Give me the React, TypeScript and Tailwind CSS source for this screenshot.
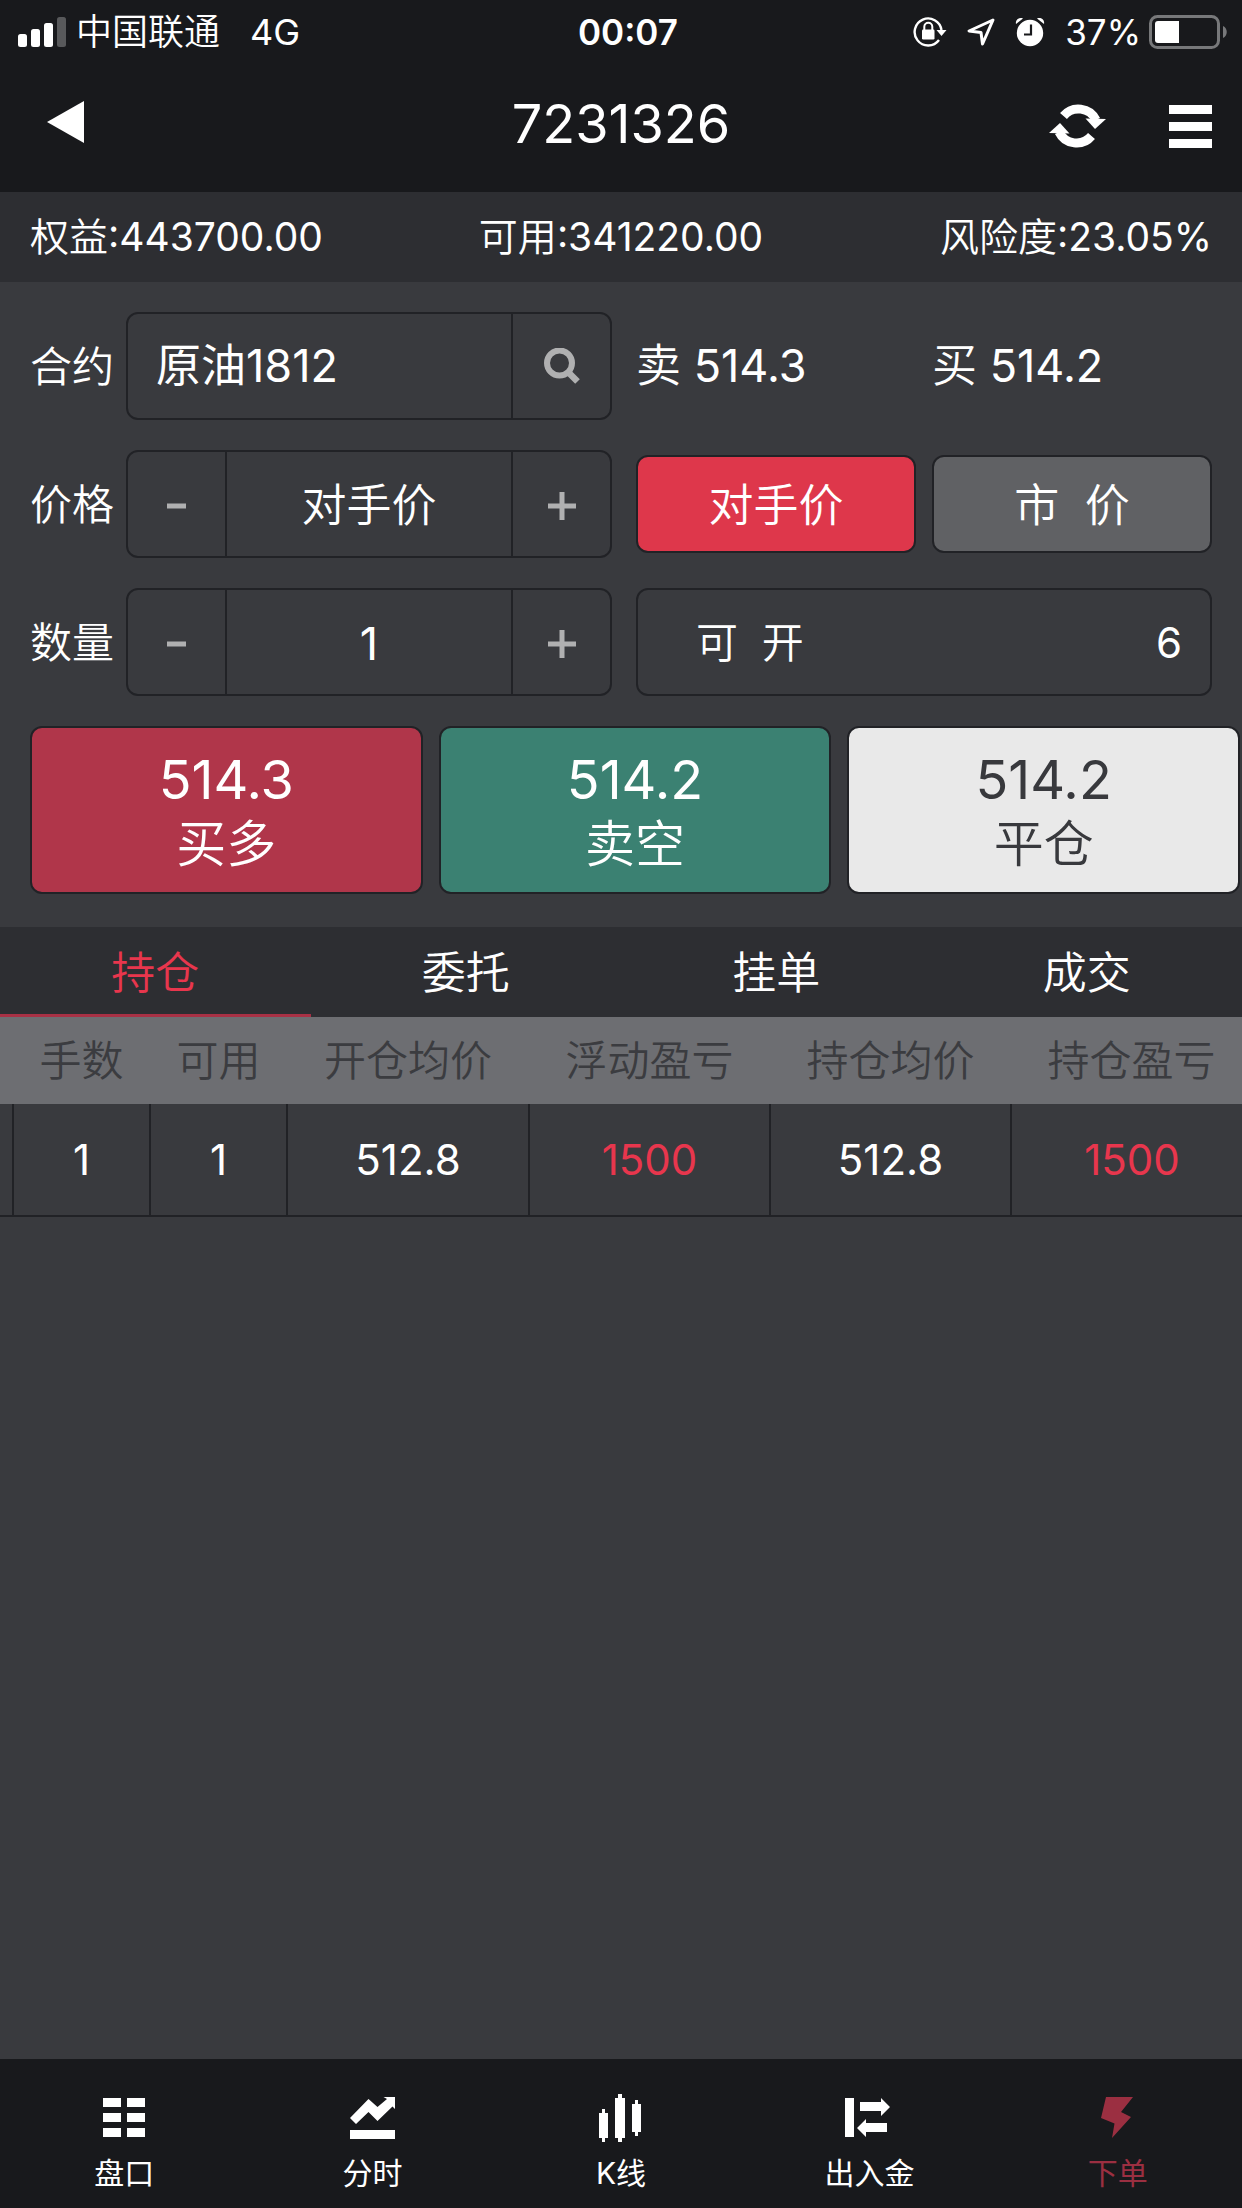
import { useState } from "react";
import type { ReactNode } from "react";
import { clsx } from "clsx";

const tabs = ["持仓", "委托", "挂单", "成交"];

const columns = [
  { label: "手数", width: "w-[137px]" },
  { label: "可用", width: "w-[137px]" },
  { label: "开仓均价", width: "w-[242px]" },
  { label: "浮动盈亏", width: "w-[241px]" },
  { label: "持仓均价", width: "w-[241px]" },
  { label: "持仓盈亏", width: "w-[241px]" },
];

const positions = [
  [
    { value: "1" },
    { value: "1" },
    { value: "512.8" },
    { value: "1500", profit: true },
    { value: "512.8" },
    { value: "1500", profit: true },
  ],
];

const actions = [
  { price: "514.3", label: "买多", className: "bg-[#b0364a] text-white" },
  { price: "514.2", label: "卖空", className: "bg-[#3b8172] text-white" },
  { price: "514.2", label: "平仓", className: "bg-[#e9e9e9] text-[#38393d]" },
];

function SignalIcon() {
  return (
    <svg width="48" height="30" viewBox="0 0 48 30" fill="#fff" aria-hidden="true">
      <rect x="0" y="17" width="9" height="13" rx="2.5" />
      <rect x="13" y="12" width="9" height="18" rx="2.5" />
      <rect x="26" y="6" width="9" height="24" rx="2.5" />
      <rect x="39" y="0" width="9" height="30" rx="2.5" fill="#58595b" />
    </svg>
  );
}

function RotationLockIcon() {
  return (
    <svg width="34" height="32" viewBox="0 0 34 32" fill="none" stroke="#fff" aria-hidden="true">
      <path d="M28.5 14A13.5 13.5 0 1 0 26 24" strokeWidth="2.4" />
      <path d="M23.5 14h10l-5 6z" fill="#fff" stroke="none" />
      <rect x="9" y="13.5" width="12.5" height="10" rx="1.2" fill="#fff" stroke="none" />
      <path d="M11.3 14v-3.2a4 4 0 0 1 8 0V14" strokeWidth="2" />
    </svg>
  );
}

function LocationIcon() {
  return (
    <svg width="28" height="28" viewBox="0 0 28 28" fill="none" stroke="#fff" aria-hidden="true">
      <path d="M26 2 2 13l12 1.5L15.5 26z" strokeWidth="3" strokeLinejoin="round" />
    </svg>
  );
}

function AlarmIcon() {
  return (
    <svg width="30" height="30" viewBox="0 0 30 30" aria-hidden="true">
      <circle cx="15" cy="16" r="13.2" fill="#fff" />
      <path d="M1 7C0 3 4 0 8 1.5zM29 7C30 3 26 0 22 1.5z" fill="#fff" />
      <path d="M16 7.5V17.5H9" fill="none" stroke="#18191c" strokeWidth="2.2" />
    </svg>
  );
}

function BatteryIcon() {
  return (
    <svg width="79" height="34" viewBox="0 0 79 34" aria-hidden="true">
      <rect x="1.5" y="1.5" width="68" height="31" rx="7" fill="none" stroke="#77787a" strokeWidth="3" />
      <path d="M9 6h21v22H9a3 3 0 0 1-3-3V9a3 3 0 0 1 3-3z" fill="#fff" />
      <path d="M74 11c5 2 5 10 0 12z" fill="#77787a" />
    </svg>
  );
}

function RefreshIcon() {
  return (
    <svg width="58" height="50" viewBox="0 0 58 50" fill="none" stroke="#fff" strokeWidth="9" aria-hidden="true">
      <path d="M14.5 15A19.5 19.5 0 0 1 47 19" />
      <path d="M36.5 17.5 57 18 46 28z" fill="#fff" stroke="none" />
      <path d="M42.5 35A19.5 19.5 0 0 1 10 31" />
      <path d="M20.5 32.5 0 32 11 22z" fill="#fff" stroke="none" />
    </svg>
  );
}

function SearchIcon() {
  return (
    <svg width="36" height="36" viewBox="0 0 36 36" fill="none" stroke="#b0b0b1" aria-hidden="true">
      <circle cx="15.5" cy="15" r="12.5" strokeWidth="6" />
      <path d="m24 24 9.5 9.5" strokeWidth="6.5" />
    </svg>
  );
}

function MinusIcon() {
  return (
    <svg width="28" height="28" viewBox="0 0 28 28" fill="#b0b0b1" aria-hidden="true">
      <rect x="4" y="11.5" width="19" height="5" />
    </svg>
  );
}

function PlusIcon() {
  return (
    <svg width="28" height="28" viewBox="0 0 28 28" fill="#b0b0b1" aria-hidden="true">
      <rect x="0" y="11.5" width="28" height="5" />
      <rect x="11.5" y="0" width="5" height="28" />
    </svg>
  );
}

const navItems = [
  {
    label: "盘口",
    icon: <path d="M3 7h18v9H3zM27 7h18v9H27zM3 22h18v9H3zM27 22h18v9H27zM3 37h18v9H3zM27 37h18v9H27z" />,
  },
  {
    label: "分时",
    icon: <path d="M1 27 19.5 8l9 8L38 8l-3.5-2H46v12l-2.5-2.5L28.5 30l-9-9L7 33zM1 39h45v9H1z" />,
  },
  {
    label: "K线",
    icon: (
      <path d="M5 18h3v4h3v25H8v4H5v-4H2V22h3zM21 3h4v4h3v40h-3v4h-4v-4h-3V7h3zM38 9h3v4h3v28h-3v4h-3v-4h-3V13h3z" />
    ),
  },
  {
    label: "出入金",
    icon: <path d="M0 7h9v39H0zM15 11h21V7l9 9-9 9v-5H15zM42 32v9H21v5l-9-9 9-9v4z" />,
  },
  {
    label: "下单",
    icon: <path d="M12 6h27L27 21l10 5-19 21 2.5-14.5L7 27z" />,
    active: true,
  },
];

function FieldRow({ label, id, children, aside }: { label: string; id: string; children: ReactNode; aside: ReactNode }) {
  return (
    <div className="grid grid-cols-[582fr_576fr] items-center gap-6">
      <div className="flex items-center">
        <label htmlFor={id} className="w-24 shrink-0 text-[42px]">
          {label}
        </label>
        <div className="flex h-[108px] min-w-0 flex-1 rounded-xl border-2 border-[#212226]">{children}</div>
      </div>
      {aside}
    </div>
  );
}

type StepperProps = {
  id: string;
  name: string;
  value: string;
  numeric?: boolean;
  onStep: (n: number) => void;
};

function Stepper({ id, name, value, numeric, onStep }: StepperProps) {
  return (
    <>
      <button
        type="button"
        aria-label={`${name}减少`}
        onClick={() => onStep(-1)}
        className="flex w-[99px] shrink-0 items-center justify-center border-r-2 border-[#212226] pt-1"
      >
        <MinusIcon />
      </button>
      <input
        id={id}
        value={value}
        readOnly
        className={clsx(
          "w-0 min-w-0 flex-1 bg-transparent pt-1 text-center text-[45px] outline-none",
          numeric && "font-normal"
        )}
      />
      <button
        type="button"
        aria-label={`${name}增加`}
        onClick={() => onStep(1)}
        className="flex w-[99px] shrink-0 items-center justify-center border-l-2 border-[#212226] pt-1"
      >
        <PlusIcon />
      </button>
    </>
  );
}

export default function App() {
  const [contract, setContract] = useState("原油1812");
  const [quantity, setQuantity] = useState(1);
  const [activeTab, setActiveTab] = useState(tabs[0]);
  const [priceType, setPriceType] = useState("对手价");

  return (
    <div className="flex min-h-screen flex-col overflow-x-hidden bg-[#393a3e] font-[Inter,'Noto_Sans_CJK_SC',sans-serif] font-[350] text-white">
      <header className="bg-[#18191c]">
        <div className="grid h-16 grid-cols-[1fr_auto_1fr] items-center pr-1 pl-[18px] text-[35px] font-normal">
          <div className="flex items-center gap-[10px] text-[36px]">
            <SignalIcon />
            <span className="font-[350]">中国联通</span>
            <span className="pl-5">4G</span>
          </div>
          <time className="font-semibold">00:07</time>
          <div className="flex items-center justify-end pr-[10px]">
            <div className="flex items-center gap-5 pr-5">
              <RotationLockIcon />
              <LocationIcon />
              <AlarmIcon />
            </div>
            <span className="pr-2">37%</span>
            <BatteryIcon />
          </div>
        </div>
        <div className="grid h-32 grid-cols-[1fr_auto_1fr] items-start px-[30px]">
          <button type="button" aria-label="返回" className="flex h-[116px] w-[55px] items-center justify-end">
            <svg width="38" height="42" viewBox="0 0 38 42" fill="#fff" aria-hidden="true">
              <path d="M0 21 37 0v42z" />
            </svg>
          </button>
          <h1 className="text-[54px] leading-[120px] font-normal">7231326</h1>
          <div className="flex h-[124px] items-center justify-end gap-[62px]">
            <button type="button" aria-label="刷新">
              <RefreshIcon />
            </button>
            <button type="button" aria-label="菜单" className="flex w-[43px] flex-col gap-2">
              <span className="h-[9px] bg-white" />
              <span className="h-[9px] bg-white" />
              <span className="h-[9px] bg-white" />
            </button>
          </div>
        </div>
      </header>

      <section className="grid h-[90px] grid-cols-[1fr_auto_1fr] items-center bg-[#2d2e32] px-[30px] text-[39px]">
        <span>
          权益<span className="font-normal">:443700.00</span>
        </span>
        <span>
          可用<span className="font-normal">:341220.00</span>
        </span>
        <span className="text-right">
          风险度<span className="font-normal">:23.05%</span>
        </span>
      </section>

      <form className="pb-[33px]" onSubmit={(e) => e.preventDefault()}>
        <div className="flex flex-col gap-[30px] px-[30px] pt-[30px]">
          <FieldRow
            label="合约"
            id="contract"
            aside={
              <div className="grid grid-cols-2 gap-4 text-[45px]">
                <span>
                  卖 <span className="font-normal">514.3</span>
                </span>
                <span>
                  买 <span className="font-normal">514.2</span>
                </span>
              </div>
            }
          >
            <input
              id="contract"
              value={contract}
              onChange={(e) => setContract(e.target.value)}
              className="w-0 min-w-0 flex-1 bg-transparent pl-7 text-[45px] font-normal outline-none"
            />
            <button
              type="button"
              aria-label="搜索"
              className="flex w-[99px] shrink-0 items-center justify-center border-l-2 border-[#212226]"
            >
              <SearchIcon />
            </button>
          </FieldRow>

          <FieldRow
            label="价格"
            id="price"
            aside={
              <div className="grid grid-cols-2 gap-4 text-[45px]">
                <button
                  type="button"
                  onClick={() => setPriceType("对手价")}
                  className="h-[98px] rounded-xl border-2 border-[#212226] bg-[#de374b] pt-1"
                >
                  对手价
                </button>
                <button
                  type="button"
                  onClick={() => setPriceType("市价")}
                  className="h-[98px] rounded-xl border-2 border-[#212226] bg-[#606164] pt-1 whitespace-pre"
                >
                  {"市  价"}
                </button>
              </div>
            }
          >
            <Stepper id="price" name="价格" value={priceType} onStep={() => setPriceType("对手价")} />
          </FieldRow>

          <FieldRow
            label="数量"
            id="quantity"
            aside={
              <div className="flex h-[108px] items-center justify-between rounded-xl border-2 border-[#212226] pr-7 pl-[58px] text-[42px]">
                <span className="whitespace-pre">{"可  开"}</span>
                <output className="font-normal">6</output>
              </div>
            }
          >
            <Stepper
              id="quantity"
              name="数量"
              value={String(quantity)}
              numeric
              onStep={(n) => setQuantity((q) => Math.max(1, q + n))}
            />
          </FieldRow>
        </div>

        {/* order buttons run almost to the right edge */}
        <div className="grid grid-cols-3 gap-4 pt-[30px] pr-[2px] pl-[30px]">
          {actions.map((action) => (
            <button
              key={action.label}
              type="submit"
              className={clsx(
                "flex h-[168px] flex-col items-center justify-center rounded-xl border-2 border-[#212226] pt-1",
                action.className
              )}
            >
              <span className="text-[54px] leading-[64px] font-normal">{action.price}</span>
              <span className="text-[50px] leading-[64px]">{action.label}</span>
            </button>
          ))}
        </div>
      </form>

      <div role="tablist" className="grid h-[90px] grid-cols-4 bg-[#2d2e32] text-[44px]">
        {tabs.map((tab) => (
          <button
            key={tab}
            type="button"
            role="tab"
            aria-selected={tab === activeTab}
            onClick={() => setActiveTab(tab)}
            className={clsx(
              "border-b-3 pt-1",
              tab === activeTab ? "border-[#a83145] text-[#e8364d]" : "border-transparent"
            )}
          >
            {tab}
          </button>
        ))}
      </div>

      <main className="flex-1 overflow-x-hidden">
        <table className="w-[1252px] table-fixed border-collapse text-center text-[42px]">
          <thead>
            <tr className="h-[87px] bg-[#6d6e72] text-[#3b3c40]">
              <td className="w-[13px]" />
              {columns.map((column) => (
                <th key={column.label} scope="col" className={clsx("font-[350] whitespace-nowrap", column.width)}>
                  {column.label}
                </th>
              ))}
            </tr>
          </thead>
          <tbody className="font-normal">
            {positions.map((row, i) => (
              <tr key={i} className="h-28 border-b-2 border-[#212226]">
                <td />
                {row.map((cell, j) => (
                  <td key={j} className={clsx("border-l-2 border-[#212226]", cell.profit && "text-[#e8364d]")}>
                    {cell.value}
                  </td>
                ))}
              </tr>
            ))}
          </tbody>
        </table>
      </main>

      <nav className="grid h-[149px] grid-cols-5 bg-[#18191c]">
        {navItems.map((item) => (
          <a
            key={item.label}
            href="#"
            className={clsx(
              "flex flex-col items-center pt-8 text-[30px] leading-[44px] font-normal",
              item.active ? "text-[#9b2f41]" : "text-white"
            )}
          >
            <svg width="48" height="60" viewBox="0 0 48 60" fill="currentColor" aria-hidden="true">
              {item.icon}
            </svg>
            {item.label}
          </a>
        ))}
      </nav>
    </div>
  );
}
